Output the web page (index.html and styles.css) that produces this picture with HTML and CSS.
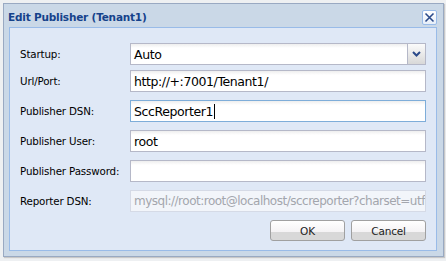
FILE: index.html
```html
<!DOCTYPE html>
<html>
<head>
<meta charset="utf-8">
<link rel="stylesheet" href="styles.css">
</head>
<body>
<div class="window">
  <div class="header">
    <span class="title">Edit Publisher (Tenant1)</span>
    <span class="close">
      <svg width="11" height="11" viewBox="0 0 11 11"><path d="M1.5 1.5 L9.5 9.5 M9.5 1.5 L1.5 9.5" stroke="#2b4a8a" stroke-width="1.6" fill="none"/></svg>
    </span>
  </div>
  <div class="body">
    <div class="form">
      <div class="row r1">
        <label class="lbl">Startup:</label>
        <div class="combo">
          <span class="field-text">Auto</span>
          <span class="trigger"><svg width="9" height="6" viewBox="0 0 9 6"><path d="M1 1 L4.5 4.5 L8 1" stroke="#2b4a8a" stroke-width="2" fill="none"/></svg></span>
        </div>
      </div>
      <div class="row">
        <label class="lbl">Url/Port:</label>
        <div class="field"><span class="field-text">http://+:7001/Tenant1/</span></div>
      </div>
      <div class="row">
        <label class="lbl">Publisher DSN:</label>
        <div class="field focus"><span class="field-text">SccReporter1</span><span class="caret"></span></div>
      </div>
      <div class="row">
        <label class="lbl">Publisher User:</label>
        <div class="field"><span class="field-text">root</span></div>
      </div>
      <div class="row">
        <label class="lbl">Publisher Password:</label>
        <div class="field"></div>
      </div>
      <div class="row">
        <label class="lbl">Reporter DSN:</label>
        <div class="field disabled"><span class="field-text">mysql://root:root@localhost/sccreporter?charset=utf</span></div>
      </div>
      <div class="buttons">
        <button class="btn">OK</button>
        <button class="btn">Cancel</button>
      </div>
    </div>
  </div>
</div>
</body>
</html>
```
FILE: styles.css
```css
html, body {
  margin: 0;
  padding: 0;
  background: #eef0f2;
  width: 446px;
  height: 261px;
  overflow: hidden;
}
.window {
  margin: 3px 0 0 3px;
  width: 439px;
  height: 252px;
  border: 1px solid #99a9c2;
  background: #cad8e7;
  display: flex;
  flex-direction: column;
  box-shadow: 1px 1px 1px #c8c8c8;
}
.header {
  height: 23px;
  display: flex;
  align-items: center;
  justify-content: space-between;
  padding: 0 6px 0 4px;
}
.title {
  font-family: "DejaVu Sans", sans-serif;
  font-weight: bold;
  font-size: 10.5px;
  color: #15428b;
  letter-spacing: -0.2px;
  padding-top: 2px;
}
.close {
  width: 13px;
  height: 13px;
  border: 1px solid #99bbe8;
  border-radius: 2px;
  background: linear-gradient(#ffffff, #e6eef9);
  display: flex;
  align-items: center;
  justify-content: center;
  margin-top: 4px;
}
.body {
  flex: 1;
  margin: 0 6px 5px 5px;
  border: 1px solid #99bbe8;
  background: #dfe8f6;
}
.form {
  padding: 15px 10px 0 10px;
  display: flex;
  flex-direction: column;
}
.row {
  display: flex;
  align-items: center;
  height: 22px;
  margin-bottom: 8px;
}
.row.r1 {
  margin-bottom: 5px;
}
.lbl {
  flex: 0 0 110px;
  width: 110px;
  white-space: nowrap;
  font-family: "DejaVu Sans", sans-serif;
  font-size: 10.3px;
  color: #000;
  letter-spacing: -0.15px;
}
.field, .combo {
  width: 294px;
  height: 20px;
  border: 1px solid #b5b8c8;
  background: #fff linear-gradient(#eeeeee, #ffffff 4px);
  display: flex;
  align-items: center;
  overflow: hidden;
  white-space: nowrap;
}
.field-text {
  padding-left: 3px;
  font-family: "DejaVu Sans", sans-serif;
  font-size: 12.5px;
  color: #000;
  letter-spacing: -0.4px;
}
.combo {
  justify-content: space-between;
}
.combo .field-text {
  flex: 1;
}
.trigger {
  width: 17px;
  height: 20px;
  border-left: 1px solid #b5b8c8;
  background: linear-gradient(#fbfbfb, #d8d8d8);
  display: flex;
  align-items: center;
  justify-content: center;
}
.field.focus {
  border-color: #7eadd9;
}
.caret {
  width: 1px;
  height: 15px;
  background: #000;
  margin-left: 1px;
}
.field.disabled {
  background: #f2f5fa;
  border-color: #d5dae6;
}
.field.disabled .field-text {
  color: #a3a6ad;
  font-size: 12px;
  letter-spacing: -0.5px;
}
.buttons {
  display: flex;
  justify-content: flex-end;
  gap: 6px;
}
.btn {
  width: 75px;
  height: 21px;
  padding: 0;
  border: 1px solid #a0a0a0;
  border-radius: 3px;
  background: linear-gradient(#ffffff, #f4f2f4 60%, #d8d8d8 60%, #d8d8d8);
  font-family: "DejaVu Sans", sans-serif;
  font-size: 10.5px;
  color: #222;
  letter-spacing: -0.2px;
}
```
